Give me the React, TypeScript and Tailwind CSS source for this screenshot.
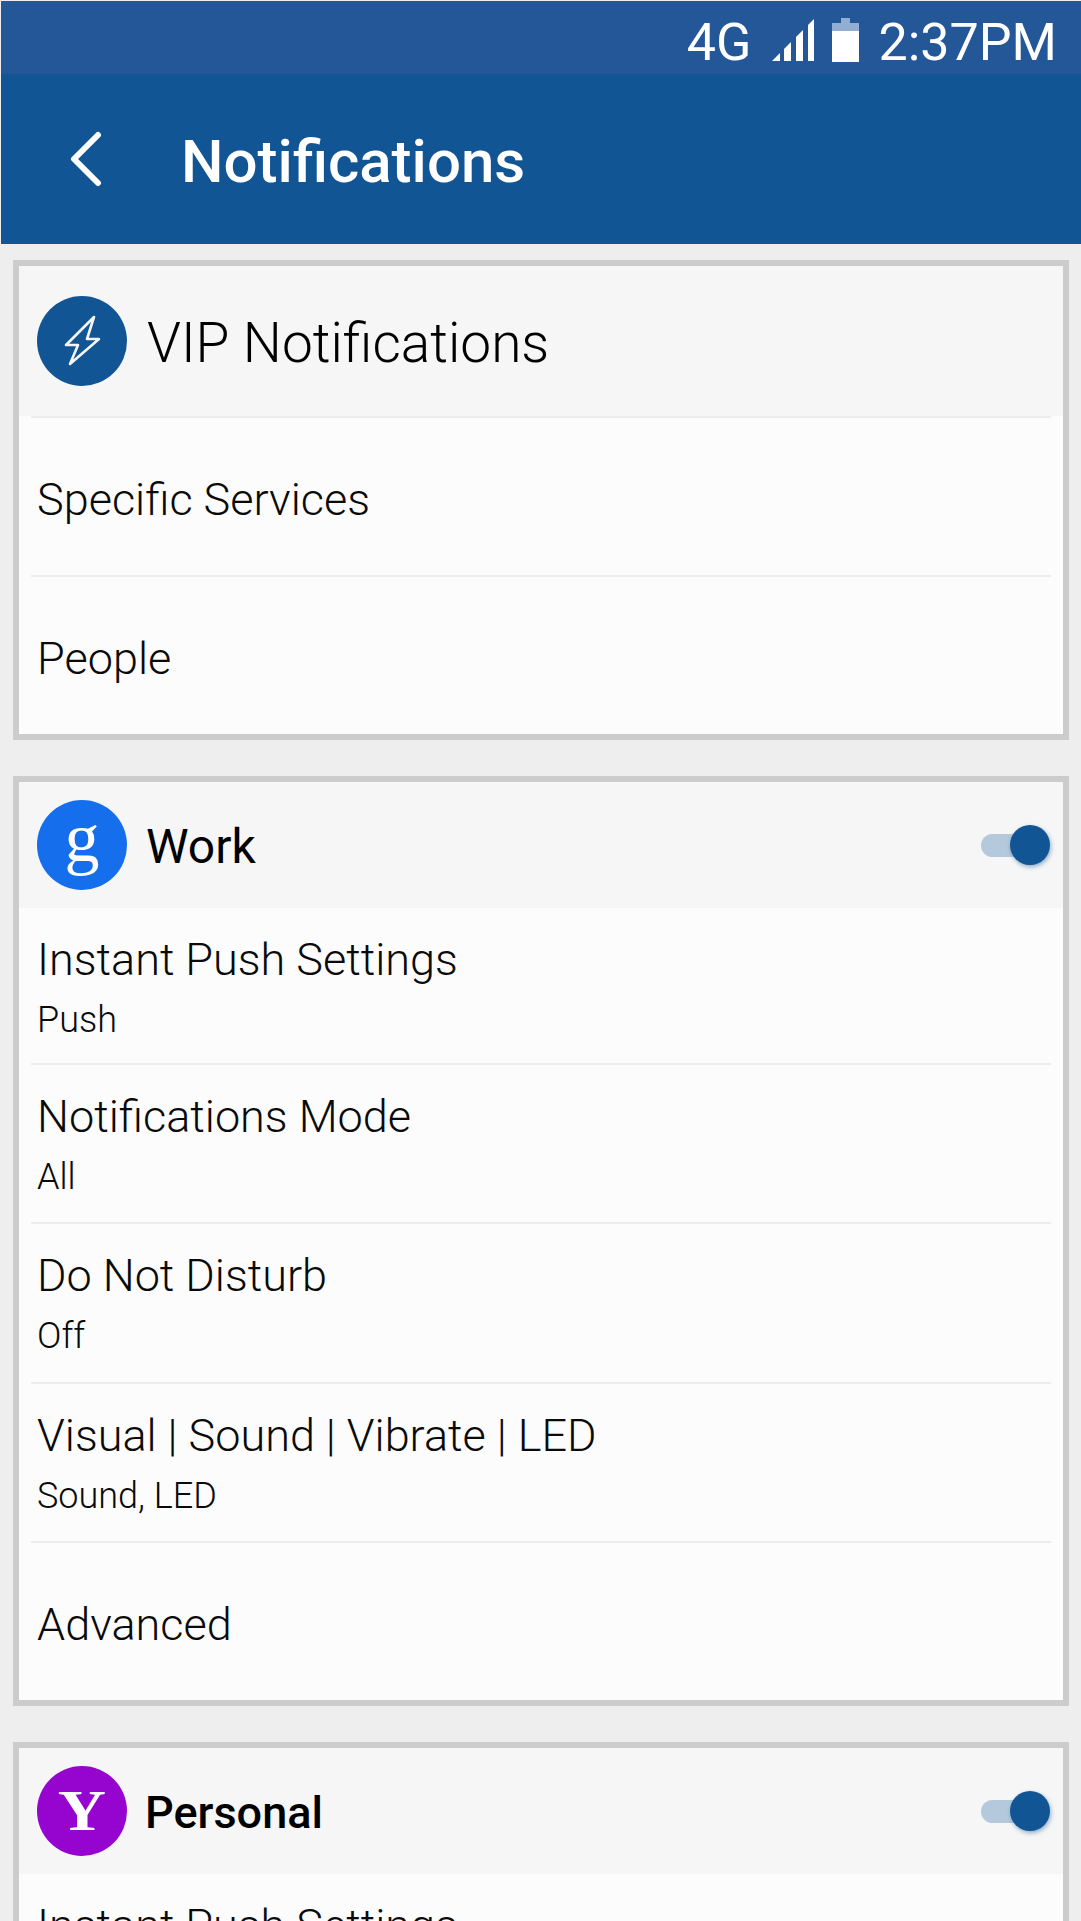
import React from "react";

const workRows = [
  { title: "Instant Push Settings", sub: "Push", h: "h-[157px]" },
  { title: "Notifications Mode", sub: "All", h: "h-[159px]" },
  { title: "Do Not Disturb", sub: "Off", h: "h-[160px]" },
  { title: "Visual | Sound | Vibrate | LED", sub: "Sound, LED", h: "h-[159px]" },
];

function Toggle() {
  return (
    <div className="relative mr-[13px] h-[23px] w-[69px]">
      <div className="h-[23px] w-[50px] rounded-full bg-[#b4c9dc]" />
      <div className="absolute top-[-9px] right-[0px] h-[40px] w-[40px] rounded-full bg-[#125595] shadow-[1px_2px_4px_rgba(18,85,149,0.45)]" />
    </div>
  );
}

function Row({ title, sub, h = "h-[159px]", last }: { title: string; sub?: string; h?: string; last?: boolean }) {
  return (
    <div className={"mx-[12px] " + h + (last ? "" : " border-b-2 border-[#ececec]")}>
      {sub ? (
        <div className="px-[6px] pt-[22px]">
          <p className="text-[45px] leading-[60px] font-light text-[#0a0a0a]">{title}</p>
          <p className="mt-[8px] text-[36px] leading-[44px] font-light text-[#0a0a0a]">{sub}</p>
        </div>
      ) : (
        <div className="flex h-full items-center px-[6px] pt-[6px]">
          <p className="text-[45px] leading-[60px] font-light text-[#0a0a0a]">{title}</p>
        </div>
      )}
    </div>
  );
}

function AccountHeader({ name, nameClass, color, glyph }: { name: string; nameClass: string; color: string; glyph: React.ReactNode }) {
  return (
    <div className="flex h-[126px] items-center bg-[#f6f6f6] pl-[18px]">
      <div className={"flex h-[90px] w-[90px] items-center justify-center rounded-full " + color}>{glyph}</div>
      <span className={"mt-[3px] flex-1 text-black " + nameClass}>{name}</span>
      <Toggle />
    </div>
  );
}

export default function App() {
  return (
    <div className="h-[1921px] overflow-hidden bg-[#eeeeee] pt-[1px] pl-[1px] font-['Roboto',sans-serif]">
      <div className="flex h-[73px] items-end justify-end bg-[#245798] pr-[24px] pb-[12px] text-[52px] leading-[38px] text-white">
        <span className="font-normal">4G</span>
        <svg className="mr-[17px] ml-[19px]" width="44" height="44" viewBox="0 0 44 44" fill="white">
          <path d="M1 43 L9 35 V43 Z" />
          <path d="M13 43 V31 L20 24 V43 Z" />
          <path d="M25 43 V19 L32 12 V43 Z" />
          <path d="M37 43 V7 L43 1 V43 Z" />
        </svg>
        <svg className="mr-[20px]" width="27" height="44" viewBox="0 0 27 44">
          <path d="M9 0 H18 V5 H27 V13 H0 V5 H9 Z" fill="#92aed2" />
          <rect y="13" width="27" height="31" fill="white" />
        </svg>
        <span className="font-normal">2:37PM</span>
      </div>
      <div className="flex h-[170px] items-center bg-[#125595] pl-[68px]">
        <svg width="34" height="56" viewBox="0 0 34 56" fill="none" stroke="white" strokeWidth="6" strokeLinecap="round" strokeLinejoin="round">
          <path d="M29 4 L5 28 L29 52" />
        </svg>
        <span className="mt-[5px] ml-[78px] text-[60px] font-medium text-white">Notifications</span>
      </div>

      <div className="flex flex-col gap-[36px] px-[12px] pt-[16px]">
        <section className="border-[6px] border-[#cccccc] bg-[#fcfcfc]">
          <div className="flex h-[150px] items-center bg-[#f6f6f6] pl-[18px]">
            <div className="flex h-[90px] w-[90px] items-center justify-center rounded-full bg-[#125595]">
              <svg width="37" height="52" viewBox="0 0 37 52" fill="none" stroke="#f4f6f9" strokeWidth="2.6" strokeLinejoin="round">
                <path d="M30 2 L2 30 H14 L6 49 L35 24 H23 Z" />
              </svg>
            </div>
            <span className="mt-[4px] ml-[20px] text-[55px] font-light text-black">VIP Notifications</span>
          </div>
          <div className="mx-[12px] h-[2px] bg-[#ececec]" />
          <Row title="Specific Services" />
          <Row title="People" h="h-[157px]" last />
        </section>

        <section className="border-[6px] border-[#cccccc] bg-[#fcfcfc]">
          <AccountHeader
            name="Work"
            nameClass="ml-[19px] text-[48px] font-normal"
            color="bg-[#156eeb]"
            glyph={<span className="mt-[-14px] font-['Liberation_Serif',serif] text-[70px] leading-[70px] text-white">g</span>}
          />
          {workRows.map((r) => (
            <Row key={r.title} title={r.title} sub={r.sub} h={r.h} />
          ))}
          <Row title="Advanced" h="h-[157px]" last />
        </section>

        <section className="border-[6px] border-[#cccccc] bg-[#fcfcfc]">
          <AccountHeader
            name="Personal"
            nameClass="ml-[18px] text-[45px] font-medium"
            color="bg-[#9505cf]"
            glyph={<span className="scale-x-[1.15] font-['Liberation_Serif',serif] text-[58px] leading-[58px] font-bold text-white">Y</span>}
          />
          <Row title="Instant Push Settings" sub="Push" />
        </section>
      </div>
    </div>
  );
}
